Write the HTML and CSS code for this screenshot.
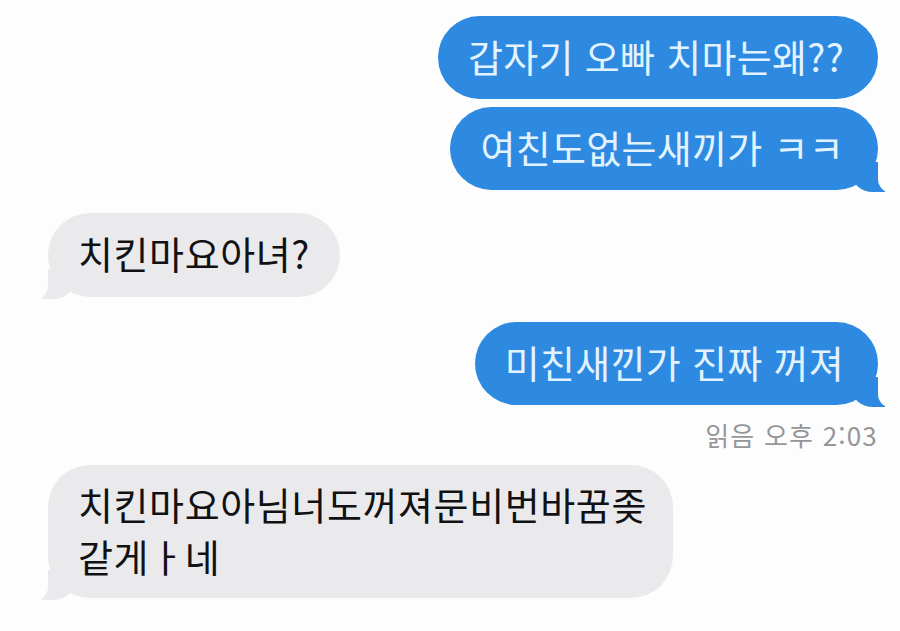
FILE: index.html
```html
<!DOCTYPE html>
<html lang="ko">
<head>
<meta charset="utf-8">
<title>Chat</title>
<link rel="stylesheet" href="styles.css">
</head>
<body>
<div class="chat">
  <div class="bubble sent first">갑자기 오빠 치마는왜??</div>
  <div class="bubble sent tail second">여친도없는새끼가 ㅋㅋ</div>
  <div class="bubble received tail one">치킨마요아녀?</div>
  <div class="bubble sent tail third">미친새낀가 진짜 꺼져</div>
  <div class="receipt">읽음 오후 2:03</div>
  <div class="bubble received tail two">치킨마요아님너도꺼져문비번바꿈좆<br>같게ㅏ네</div>
</div>
</body>
</html>
```

FILE: styles.css
```css
html, body {
  margin: 0;
  padding: 0;
  background: #fdfdfd;
}

body {
  font-family: "Noto Sans CJK KR", "Noto Sans", sans-serif;
  width: 900px;
  height: 631px;
  overflow: hidden;
}

.chat {
  position: relative;
  z-index: 0;
  display: flex;
  flex-direction: column;
  padding: 16px 22px 0 48px;
}

.bubble {
  position: relative;
  width: fit-content;
  box-sizing: border-box;
  font-size: 38px;
  border-radius: 42px;
}

.sent {
  align-self: flex-end;
  background: #2d8ae0;
  color: #e2f3ff;
  letter-spacing: 0.3px;
  line-height: 45px;
  padding: 17px 34px 21px 30px;
}

.received {
  align-self: flex-start;
  background: #eaeaec;
  color: #111113;
  letter-spacing: 0.6px;
  line-height: 52px;
  padding: 14px 30px 18px 30px;
}

.tail.sent::before {
  content: "";
  position: absolute;
  right: -7px;
  bottom: -2px;
  width: 34px;
  height: 30px;
  background: #2d8ae0;
  border-bottom-left-radius: 22px 20px;
  z-index: -1;
}

.tail.sent::after {
  content: "";
  position: absolute;
  right: -34px;
  bottom: -3px;
  width: 34px;
  height: 32px;
  background: #fdfdfd;
  border-bottom-left-radius: 14px;
  z-index: -1;
}

.tail.received::before {
  content: "";
  position: absolute;
  left: -7px;
  bottom: -2px;
  width: 34px;
  height: 30px;
  background: #eaeaec;
  border-bottom-right-radius: 22px 20px;
  z-index: -1;
}

.tail.received::after {
  content: "";
  position: absolute;
  left: -34px;
  bottom: -3px;
  width: 34px;
  height: 32px;
  background: #fdfdfd;
  border-bottom-right-radius: 14px;
  z-index: -1;
}

.second {
  margin-top: 8px;
}

.one {
  margin-top: 23px;
}

.third {
  margin-top: 25px;
}

.receipt {
  align-self: flex-end;
  margin-top: 14px;
  font-size: 26px;
  line-height: 32px;
  letter-spacing: 1.2px;
  color: #96969a;
}

.two {
  margin-top: 14px;
  padding-top: 13px;
  padding-bottom: 16px;
  padding-right: 26px;
}
```
